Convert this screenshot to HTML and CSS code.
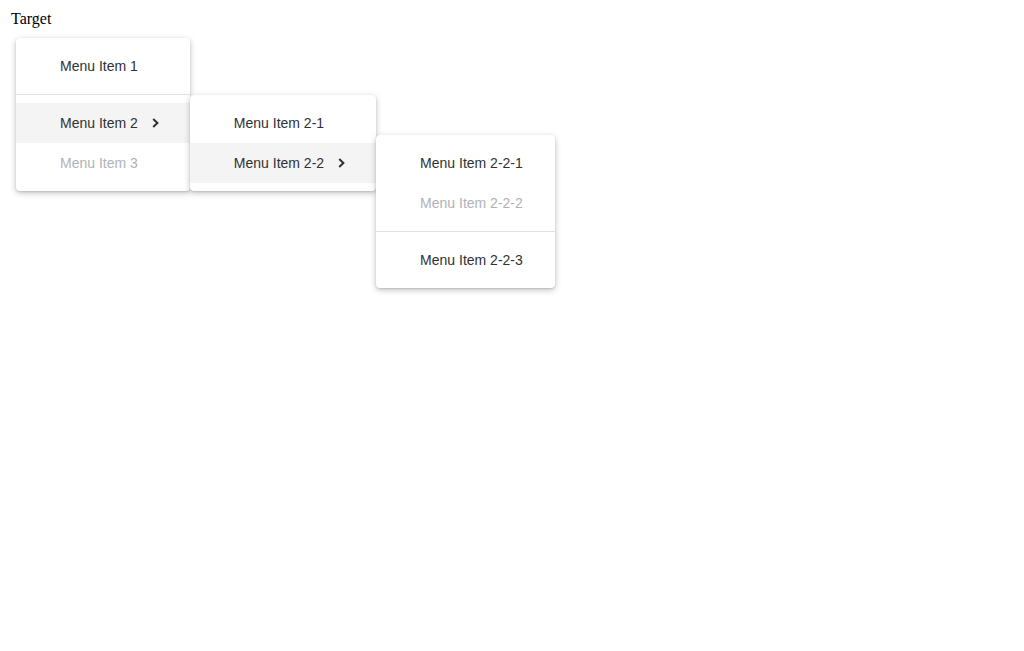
FILE: index.html
```html
<!DOCTYPE html>
<html>
<head>
<meta charset="utf-8">
<link rel="stylesheet" href="styles.css">
</head>
<body>
<div class="page">
<div class="label">Target</div>
<div class="menu root">
  <div class="item">Menu Item 1</div>
  <div class="divider"></div>
  <div class="item active has-sub">
    <span class="text">Menu Item 2</span>
    <svg class="chev" width="20" height="10" viewBox="0 0 20 10"><path d="M15.2 1 L19.4 5 L15.2 9" /></svg>
    <div class="menu sub">
      <div class="item">Menu Item 2-1</div>
      <div class="item active has-sub">
        <span class="text">Menu Item 2-2</span>
        <svg class="chev" width="20" height="10" viewBox="0 0 20 10"><path d="M15.2 1 L19.4 5 L15.2 9" /></svg>
        <div class="menu sub">
          <div class="item">Menu Item 2-2-1</div>
          <div class="item disabled">Menu Item 2-2-2</div>
          <div class="divider"></div>
          <div class="item">Menu Item 2-2-3</div>
        </div>
      </div>
    </div>
  </div>
  <div class="item disabled">Menu Item 3</div>
</div>
</div>
</body>
</html>
```
FILE: styles.css
```css
html {
  height: 100%;
  background: #fff;
}
body {
  margin: 8px;
  min-height: calc(100% - 16px);
  font-family: "Liberation Serif", serif;
  font-size: 16px;
  background: #fff;
}
.page {
  min-height: 600px;
}
.label {
  padding: 2px 3px;
  line-height: 18px;
  color: #000;
}
.menu {
  display: inline-flex;
  flex-direction: column;
  background: #fff;
  border-radius: 4px;
  padding: 8px 0;
  box-shadow: 0 2px 6px rgba(0,0,0,0.24), 0 1px 2px rgba(0,0,0,0.12);
  font-family: "Liberation Sans", Arial, sans-serif;
  font-size: 14px;
}
.root {
  margin: 8px 0 0 8px;
  position: relative;
}
.item {
  display: flex;
  align-items: center;
  height: 40px;
  line-height: 40px;
  padding: 0 32px 0 44px;
  color: #303133;
  white-space: nowrap;
  position: relative;
  cursor: default;
}
.item.active {
  background: #f4f4f4;
}
.item.disabled {
  color: #b0b2b6;
}
.divider {
  height: 1px;
  background: #e2e2e2;
  margin: 8px 0;
}
.chev {
  display: block;
  overflow: visible;
}
.chev path {
  fill: none;
  stroke: #303133;
  stroke-width: 2;
}
.sub {
  position: absolute;
  left: 100%;
  top: -8px;
  z-index: 2;
}
```
